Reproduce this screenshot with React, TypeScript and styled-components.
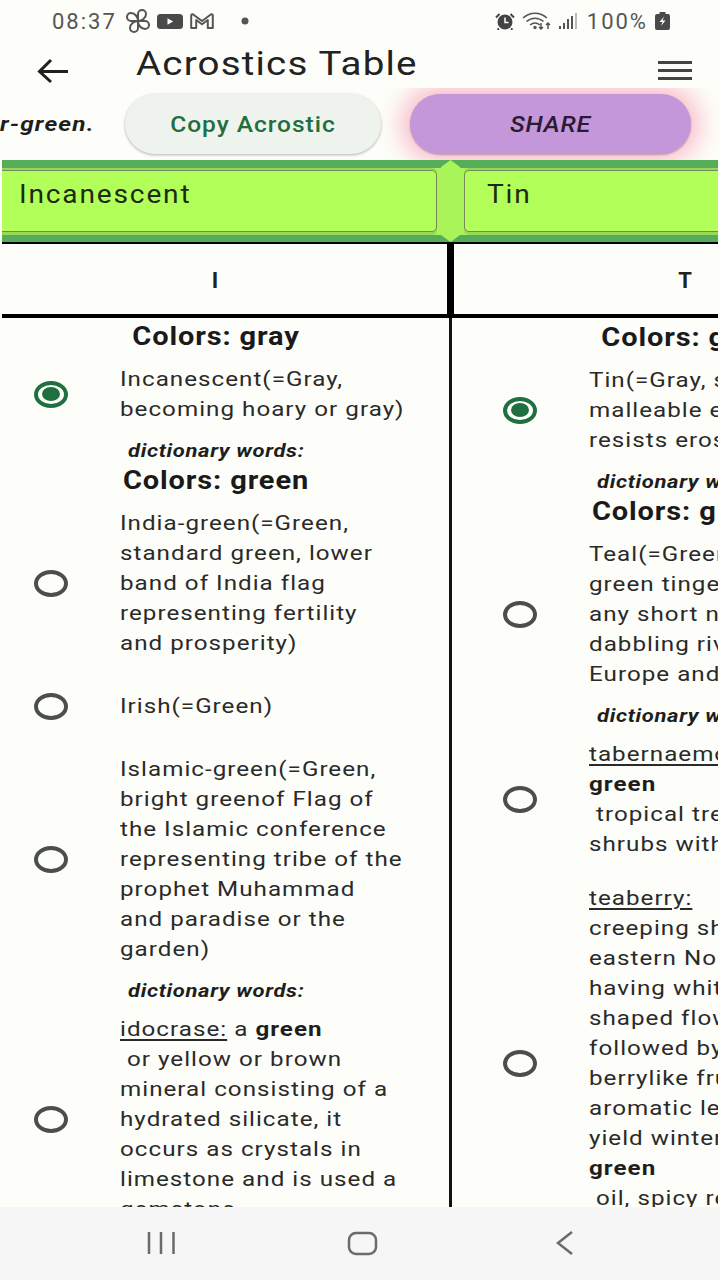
import React from "react";
import styled, { createGlobalStyle } from "styled-components";

const Global = createGlobalStyle`
  html, body { margin: 0; padding: 0; background: #fdfef9; }
  * { box-sizing: border-box; }
`;

const Page = styled.div`
  width: 720px; height: 1280px; display: flex; flex-direction: column; overflow: hidden;
  background: #fdfef9; font-family: Roboto, "Liberation Sans", sans-serif; color: #1e1e1e;
`;
const StatusBar = styled.div`
  height: 44px; flex: none; display: flex; align-items: center; padding: 0 50px 2px 52px; color: #555;
  font-size: 22px; letter-spacing: 2px;
`;
const StatusGroup = styled.div<{ $gap: number }>`display: flex; align-items: center; gap: ${(p) => p.$gap}px;`;
const Spacer = styled.div`flex: 1;`;
const Clock = styled.span`margin-right: 2px;`;
const DotGap = styled.span`width: 13px;`;
const Battery100 = styled.span`margin-left: 3px;`;
const AppBar = styled.div`
  height: 44px; flex: none; display: flex; align-items: flex-start; padding: 0 28px 0 37px;
`;
const Title = styled.div`
  font-size: 34px; line-height: 38px; letter-spacing: 1.05px; margin-left: 67px; flex: 1; white-space: nowrap; color: #222;
  transform: scaleX(1.133); transform-origin: left center;
`;
const ActionRow = styled.div`
  height: 72px; flex: none; display: flex; justify-content: flex-end; align-items: flex-start; padding: 6px 29px 0 0;
  overflow: hidden;
`;
const Trailing = styled.div`
  font-weight: 700; font-style: italic; font-size: 21px; line-height: 60px; letter-spacing: 1px; white-space: nowrap; flex: none;
  margin-right: 30px; transform: scaleX(1.16); transform-origin: right center;
`;
const CopyButton = styled.div`
  width: 256px; height: 60px; flex: none; border-radius: 30px; background: #eff3ee; color: #1f6f3c; margin-right: 29px;
  font-size: 22.5px; font-weight: 500; letter-spacing: 0.9px; display: flex; align-items: center; justify-content: center;
  box-shadow: 0 1px 3px rgba(0,0,0,.3);
  span { transform: scaleX(1.09); }
`;
const ShareButton = styled.div`
  width: 281px; height: 60px; flex: none; border-radius: 30px; background: #c497da; color: #2a1a33;
  font-size: 22px; font-weight: 500; font-style: italic; letter-spacing: 0.6px; display: flex; align-items: center; justify-content: center;
  box-shadow: 0 1px 2px rgba(0,0,0,.25), 0 0 24px 9px #f9bccb;
  span { transform: scaleX(1.14); }
`;
const Band = styled.div`
  height: 82px; flex: none; margin: 0 2px; background: #56ad59; padding: 8px 0 7px; overflow: hidden; position: relative;
`;
const BandStrip = styled.div`
  height: 67px; background: #a9f458; padding: 2px 0 3px; display: flex; margin-left: -6px;
`;
const Chip = styled.div<{ $w: number }>`
  width: ${(p) => p.$w}px; flex: none; border: 1.5px solid #74885a; border-radius: 5px; padding: 7px 0 0 22px; background: #b2ff59;
  box-shadow: 0 -2px 0 #97d957, 0 3px 0 #97d957;
  font-size: 26px; line-height: 32px; letter-spacing: 1.7px; color: #1d2a14;
  span { display: inline-block; transform: scaleX(1.08); transform-origin: left center; }
`;
const Divider = styled.div`
  width: 19px; flex: none; margin: -10px 4px -10px; background: #a9f458;
  clip-path: polygon(50% 0, 100% 7px, 100% calc(100% - 7px), 50% 100%, 0 calc(100% - 7px), 0 7px);
`;
const HeaderRow = styled.div`
  height: 77px; flex: none; margin: -1px 2px 0; display: flex; overflow: hidden; border-top: 3px solid #000; border-bottom: 4px solid #000;
`;
const HeaderCell = styled.div<{ $w: number }>`
  width: ${(p) => p.$w}px; flex: none; display: flex; align-items: center; justify-content: center;
  font-size: 22px; font-weight: 700; color: #222; padding-top: 2px;
  &:first-child { margin-left: -19px; border-right: 7px solid #000; }
`;
const Body = styled.div`
  flex: 1; min-height: 0; margin: 0 2px; display: flex; overflow: hidden;
`;
const Column = styled.div<{ $top: number }>`
  width: 469px; flex: none; height: 100%; border-right: 3px solid #111; overflow: hidden; padding-top: ${(p) => p.$top}px;
  &:first-child { margin-left: -19px; }
`;
const SectionTitle = styled.div<{ $first?: boolean }>`
  height: 28px; line-height: 28px; text-align: center; font-size: 25px; font-weight: 700; letter-spacing: 0.75px; white-space: nowrap;
  margin: ${(p) => (p.$first ? "5px" : "9px")} 0 -3px; color: #1a1a1a;
  transform: scaleX(1.16);
`;
const DictLabel = styled.div`
  height: 20px; line-height: 20px; margin-left: 145px; font-size: 19px; font-weight: 700; font-style: italic; letter-spacing: 0.55px; white-space: nowrap;
  margin-bottom: -3px; transform: scaleX(1.158); transform-origin: left center;
`;
const Row = styled.div<{ $pull?: number }>`
  display: flex; align-items: center; padding: 16px 0 17px 51px; margin-top: ${(p) => p.$pull ?? 0}px;
`;
const Radio = styled.div<{ $on?: boolean }>`
  width: 34px; height: 27px; flex: none; border-radius: 50%; border: 4px solid ${(p) => (p.$on ? "#1f7040" : "#4a4f4a")};
  margin-right: 51.5px; display: flex; align-items: center; justify-content: center;
  &::after { content: ""; width: 18px; height: 14px; border-radius: 50%; background: ${(p) => (p.$on ? "#1f7040" : "transparent")}; }
`;
const TextBlock = styled.div`
  font-size: 20.5px; line-height: 30px; letter-spacing: 0.86px; white-space: pre; color: #2a2a2a;
  transform: scaleX(1.18); transform-origin: left center;
`;
const Line = styled.div`height: 30px;`;
const Term = styled.span`text-decoration: underline; text-underline-offset: 3px;`;
const Strong = styled.span`font-weight: 700; color: #1e1e1e;`;
const NavBar = styled.div`
  height: 73px; flex: none; background: #f6f6f6; display: flex; align-items: center; padding-bottom: 2px; color: #6b6b6b;
`;
const NavSlot = styled.div`width: 720px; display: flex; justify-content: center;`;

type RowData = { on?: boolean; pull?: number; lines: React.ReactNode[] };
type Item = { t: "title"; text: string; first?: boolean } | { t: "dict" } | ({ t: "row" } & RowData);

const col1: Item[] = [
  { t: "title", text: "Colors: gray", first: true },
  { t: "row", on: true, lines: ["Incanescent(=Gray,", "becoming hoary or gray)"] },
  { t: "dict" },
  { t: "title", text: "Colors: green" },
  { t: "row", lines: ["India-green(=Green,", "standard green, lower", "band of India flag", "representing fertility", "and prosperity)"] },
  { t: "row", lines: ["Irish(=Green)"] },
  { t: "row", lines: ["Islamic-green(=Green,", "bright greenof Flag of", "the Islamic conference", "representing tribe of the", "prophet Muhammad", "and paradise or the", "garden)"] },
  { t: "dict" },
  { t: "row", lines: [<><Term>idocrase:</Term> a <Strong>green</Strong></>, " or yellow or brown", "mineral consisting of a", "hydrated silicate, it", "occurs as crystals in", "limestone and is used a", "gemstone"] },
];
const col2: Item[] = [
  { t: "title", text: "Colors: gray", first: true },
  { t: "row", on: true, lines: ["Tin(=Gray, soft silvery", "malleable element that", "resists erosion)"] },
  { t: "dict" },
  { t: "title", text: "Colors: green" },
  { t: "row", lines: ["Teal(=Green, bluish", "green tinge, also", "any short necked", "dabbling river duck of", "Europe and America)"] },
  { t: "dict" },
  { t: "row", lines: [<Term>tabernaemontana:</Term>, <Strong>green</Strong>, " tropical trees and", "shrubs with milky sap"] },
  { t: "row", pull: -9, lines: [<Term>teaberry:</Term>, "creeping shrub of", "eastern North America", "having white bell", "shaped flowers", "followed by red", "berrylike fruit and", "aromatic leaves that", "yield wintergreen", <Strong>green</Strong>, " oil, spicy red berry", "of the plant"] },
];

const renderColumn = (items: Item[]) =>
  items.map((it, i) => {
    if (it.t === "title") return <SectionTitle key={i} $first={it.first}>{it.text}</SectionTitle>;
    if (it.t === "dict") return <DictLabel key={i}>dictionary words:</DictLabel>;
    return (
      <Row key={i} $pull={it.pull}>
        <Radio $on={it.on} />
        <TextBlock>{it.lines.map((l, j) => <Line key={j}>{l}</Line>)}</TextBlock>
      </Row>
    );
  });

const Pinwheel = () => (
  <svg width="24" height="24" viewBox="0 0 24 24" fill="none" stroke="#555" strokeWidth="2">
    <path d="M12 12V5a4 4 0 0 1 8 0c0 4-4 7-8 7Z" />
    <path d="M12 12h7a4 4 0 0 1 0 8c-4 0-7-4-7-8Z" />
    <path d="M12 12v7a4 4 0 0 1-8 0c0-4 4-7 8-7Z" />
    <path d="M12 12H5a4 4 0 0 1 0-8c4 0 7 4 7 8Z" />
  </svg>
);
const YouTube = () => (
  <svg width="26" height="15" viewBox="0 0 26 15">
    <rect width="26" height="15" rx="3.5" fill="#4a4a4a" />
    <path d="M10.5 4.2v6.6l5.6-3.3Z" fill="#fff" />
  </svg>
);
const Gmail = () => (
  <svg width="24" height="16" viewBox="0 0 24 16" fill="none" stroke="#555" strokeWidth="2" strokeLinejoin="round">
    <path d="M1.2 15V2.5c0-1 1-1.500 2-1l8.800 6.500 8.800-6.500c1-.5 2 0 2 1V15h-5V7l-5.800 4.200L6.200 7v8Z" />
  </svg>
);
const Dot = () => (
  <svg width="8" height="8" viewBox="0 0 8 8"><circle cx="4" cy="4" r="3.500" fill="#555" /></svg>
);
const Alarm = () => (
  <svg width="20" height="17" viewBox="0 0 20 17">
    <circle cx="10" cy="9" r="7.500" fill="#444" />
    <path d="M1 4.500 4.500 1M19 4.500 15.500 1M4 15.500l-1.500 1.300M16 15.500l1.500 1.300" stroke="#444" strokeWidth="2" />
    <path d="M10 4.500V9.500H13.500" stroke="#fff" strokeWidth="1.500" fill="none" />
  </svg>
);
const Wifi = () => (
  <svg width="30" height="18" viewBox="0 0 30 18" fill="none" stroke="#555" strokeWidth="1.500">
    <path d="M1 6C8-.5 18-.5 25 6" />
    <path d="M4.500 9.500c5-4.500 12-4.500 17 0" />
    <path d="M8 13c3-2.500 7-2.500 10 0" />
    <circle cx="13" cy="15.500" r="1" fill="#555" />
    <path d="M19 11v6M17 15l2 2 2-2M26 17v-6M24 13l2-2 2 2" />
  </svg>
);
const Signal = () => (
  <svg width="18" height="16" viewBox="0 0 18 16">
    <rect x="0" y="13" width="2" height="3" fill="#555" />
    <rect x="4" y="10" width="2" height="6" fill="#555" />
    <rect x="8" y="6" width="2" height="10" fill="#555" />
    <rect x="12" y="3" width="2" height="13" fill="#555" />
    <rect x="16" y="0" width="2" height="16" fill="#bbb" />
  </svg>
);
const Battery = () => (
  <svg width="15" height="18" viewBox="0 0 15 18">
    <path d="M4.500 0h6v2H13a2 2 0 0 1 2 2v12a2 2 0 0 1-2 2H2a2 2 0 0 1-2-2V4a2 2 0 0 1 2-2h2.500Z" fill="#4a4a4a" />
    <path d="M9 4.500 4.500 10h3l-1.500 4L10.500 8.500h-3Z" fill="#fff" />
  </svg>
);
const BackArrow = styled((props: { className?: string }) => (
  <svg className={props.className} width="32" height="26" viewBox="0 0 32 26" fill="none" stroke="#1f1f1f" strokeWidth="3">
    <path d="M31 13.500H3M14 2 2.500 13.500 14 24" />
  </svg>
))`margin-top: 14px; flex: none;`;
const MenuIcon = styled((props: { className?: string }) => (
  <svg className={props.className} width="34" height="20" viewBox="0 0 34 20" fill="#444">
    <rect y="0" width="34" height="3" />
    <rect y="8" width="34" height="3" />
    <rect y="16" width="34" height="3" />
  </svg>
))`margin-top: 17px; flex: none;`;
const NavIcons = () => (
  <svg width="720" height="40" viewBox="0 0 720 40" fill="none" stroke="#6b6b6b" strokeWidth="2.500">
    <path d="M149 9v22M161 9v22M173.500 9v22" />
    <rect x="349" y="10" width="27" height="21" rx="7" />
    <path d="M572 9 558 20l14 11" />
  </svg>
);

export default function App() {
  return (
    <Page>
      <Global />
      <StatusBar>
        <StatusGroup $gap={7}>
          <Clock>08:37</Clock>
          <Pinwheel /><YouTube /><Gmail />
          <DotGap />
          <Dot />
        </StatusGroup>
        <Spacer />
        <StatusGroup $gap={7}>
          <Alarm /><Wifi /><Signal />
          <Battery100>100%</Battery100>
          <Battery />
        </StatusGroup>
      </StatusBar>
      <AppBar>
        <BackArrow />
        <Title>Acrostics Table</Title>
        <MenuIcon />
      </AppBar>
      <ActionRow>
        <Trailing>r-green.</Trailing>
        <CopyButton><span>Copy Acrostic</span></CopyButton>
        <ShareButton><span>SHARE</span></ShareButton>
      </ActionRow>
      <Band>
        <BandStrip>
          <Chip $w={441}><span>Incanescent</span></Chip>
          <Divider />
          <Chip $w={300}><span>Tin</span></Chip>
        </BandStrip>
      </Band>
      <HeaderRow>
        <HeaderCell $w={471}>I</HeaderCell>
        <HeaderCell $w={462}>T</HeaderCell>
      </HeaderRow>
      <Body>
        <Column $top={0}>{renderColumn(col1)}</Column>
        <Column $top={1}>{renderColumn(col2)}</Column>
      </Body>
      <NavBar>
        <NavSlot><NavIcons /></NavSlot>
      </NavBar>
    </Page>
  );
}
